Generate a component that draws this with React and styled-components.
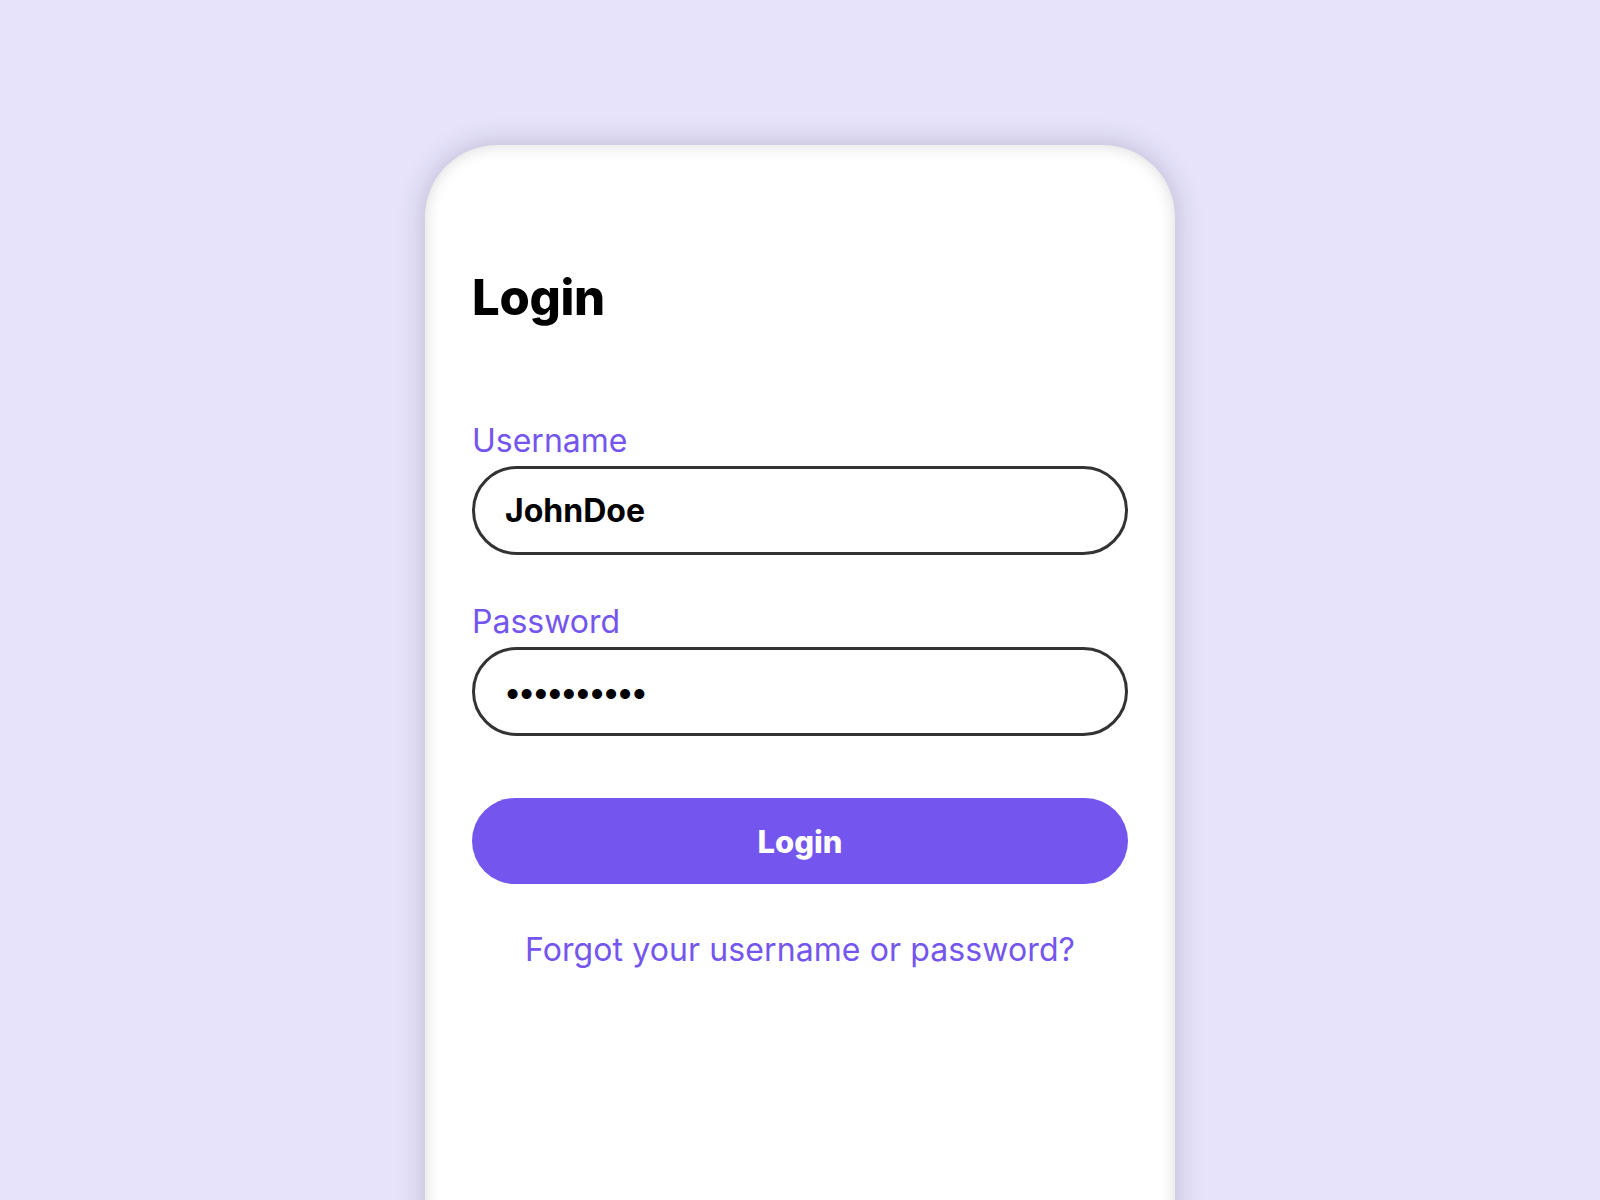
import React from 'react'
import styled, { createGlobalStyle } from 'styled-components'

const Global = createGlobalStyle`
  html, body {
    margin: 0;
    height: 100%;
    overflow: hidden;
    background: #e6e3fb;
    font-family: Inter, "Noto Sans", sans-serif;
  }
`

const Page = styled.div`
  height: 1200px;
  display: flex;
  justify-content: center;
  padding-top: 145px;
  box-sizing: border-box;
`

const Card = styled.div`
  width: 750px;
  height: 1150px;
  box-sizing: border-box;
  background: #fff;
  border-radius: 72px 72px 0 0;
  box-shadow: 0 0 28px rgba(30, 30, 50, 0.22), inset 0 0 16px rgba(0, 0, 0, 0.15);
  padding: 123px 47px 0;
  display: flex;
  flex-direction: column;
`

const Title = styled.h1`
  margin: 0 0 94px;
  font-size: 49px;
  font-weight: 800;
  color: #000;
  letter-spacing: -0.3px;
`

const Field = styled.label`
  display: flex;
  flex-direction: column;
  gap: 6px;
  margin-bottom: ${props => props.gap}px;
`

const Label = styled.span`
  font-size: 32px;
  color: #7456ee;
`

const Input = styled.input`
  height: 89px;
  box-sizing: border-box;
  border: 3.5px solid #333;
  border-radius: 45px;
  padding: 0 30px;
  font-family: Inter, "Noto Sans", sans-serif;
  font-size: 32px;
  font-weight: 650;
  color: #000;
  background: #fff;
  outline: none;
  letter-spacing: ${props => (props.type === 'password' ? '-1.1px' : '0')};
`

const Button = styled.button`
  height: 86px;
  border: none;
  border-radius: 43px;
  background: #7456ee;
  color: #fff;
  font-family: Inter, "Noto Sans", sans-serif;
  font-size: 31px;
  font-weight: 800;
  cursor: pointer;
  margin-top: 15px;
`

const Forgot = styled.a`
  margin-top: 46px;
  text-align: center;
  font-size: 32px;
  letter-spacing: 0.1px;
  color: #7456ee;
  text-decoration: none;
  cursor: pointer;
`

export default function App() {
  return (
    <>
      <Global />
      <Page>
        <Card>
          <Title>Login</Title>
          <Field gap={47}>
            <Label>Username</Label>
            <Input type="text" defaultValue="JohnDoe" readOnly />
          </Field>
          <Field gap={47}>
            <Label>Password</Label>
            <Input type="password" defaultValue="secret1234" readOnly />
          </Field>
          <Button>Login</Button>
          <Forgot>Forgot your username or password?</Forgot>
        </Card>
      </Page>
    </>
  )
}
